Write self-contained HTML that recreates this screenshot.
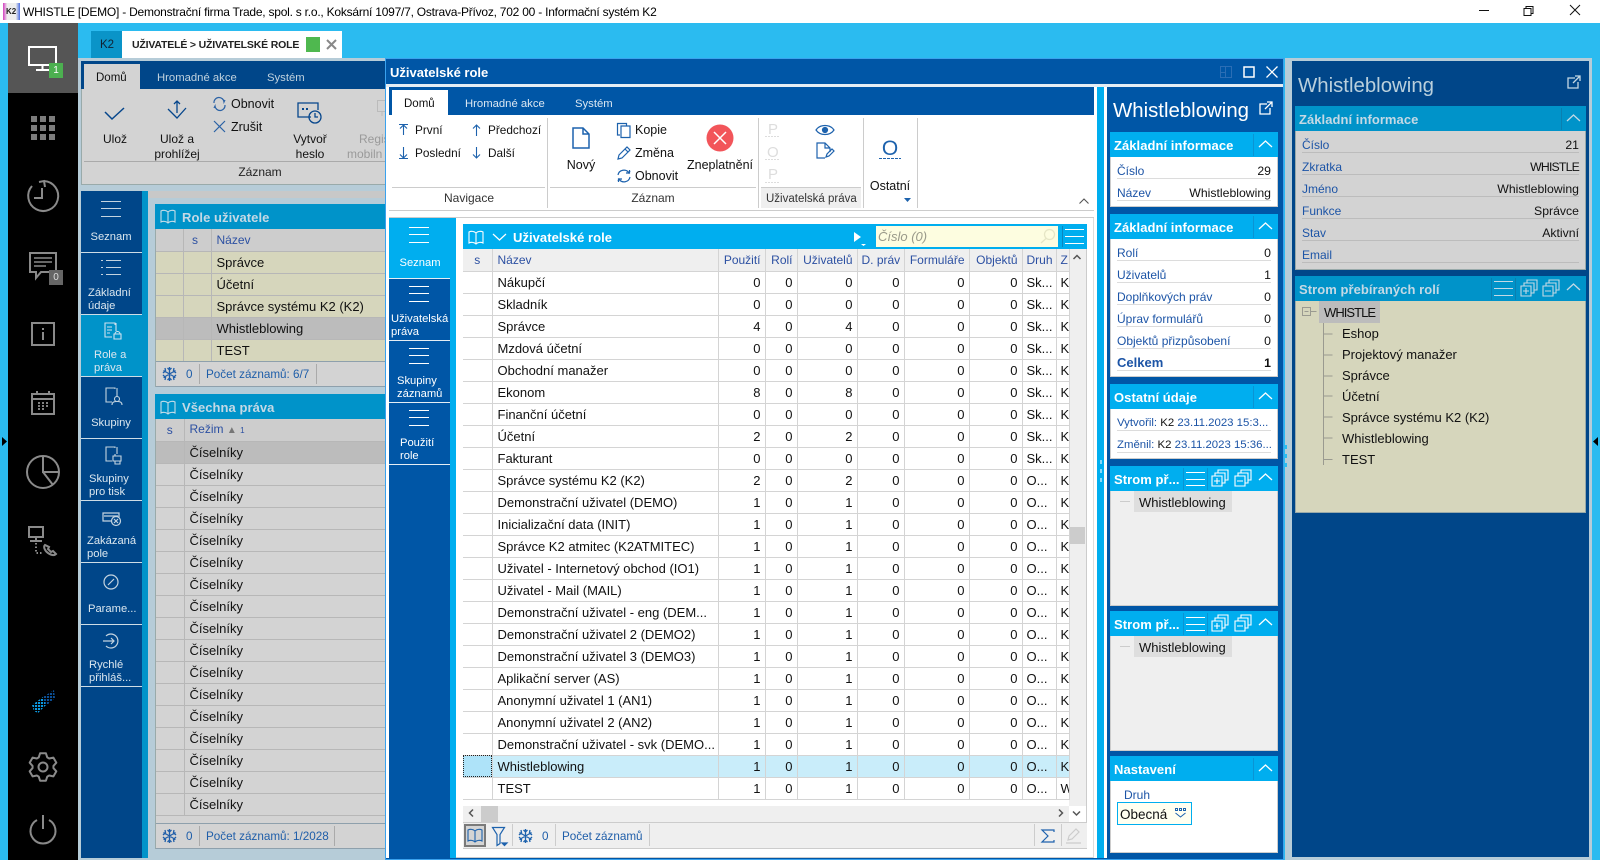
<!DOCTYPE html>
<html lang="cs"><head><meta charset="utf-8"><title>WHISTLE</title>
<style>
*{box-sizing:border-box}
html,body{margin:0;padding:0;width:1600px;height:860px;overflow:hidden;background:#2bbbf0;font:13px/16px "Liberation Sans",sans-serif;color:#111}
.b{position:absolute}
.t{position:absolute;white-space:nowrap;line-height:16px}
.c{transform:translateX(-50%)}
.r{transform:translateX(-100%)}
svg{position:absolute;overflow:visible;fill:none}
.ham{position:absolute;width:20px;height:16px;border-top:1px solid;border-bottom:1px solid}
.ham:after{content:"";position:absolute;left:0;right:0;top:6px;border-top:1px solid}
.n{color:#dbe7ef;font-size:11.2px;margin-top:1px}
.m{color:#fff;font-size:11.2px;margin-top:1px}
.lbl{color:#1c54a6;font-size:12px}
.v{font-size:12.25px}
.ln{position:absolute;height:1px;background:#dcdcdc}
.hd{font-weight:bold;font-size:13px;color:#fff;letter-spacing:.05px;margin-top:1px}
.hdim{font-weight:bold;font-size:13px;color:#c4d9e5;letter-spacing:.05px;margin-top:1px}
.rb{font-size:11.3px;margin-top:1px}
.rt{font-size:11.8px}
.st{font-size:11.7px;color:#1f5ea9;margin-top:1px}
table{position:absolute;border-collapse:collapse;table-layout:fixed;font-size:13px}
td{padding:1px 4px 0;height:22px;border-right:1px solid #d4d4d4;border-bottom:1px solid #d4d4d4;white-space:nowrap;overflow:hidden;text-align:right;line-height:16px}
td:nth-child(1),td:nth-child(2){text-align:left}
td:nth-child(9),td:nth-child(10){text-align:left;padding-right:0}
#g td:nth-child(2){padding-left:5px}
#g tr.h td{background:#efefef;color:#2c50a2;font-size:12px}
#g tr.h td:nth-child(1){text-align:center}
#g tr.h td:nth-child(n+3){text-align:right}
#g tr.s td{background:#c9edfa}
.l td{border-color:#b7b7b7;text-align:left;padding-left:5px}
.l td:nth-child(1){text-align:center;padding:1px 0 0}
</style></head><body>

<!-- title bar -->
<div class="b" style="left:0;top:0;width:1600px;height:23px;background:#fff"></div>
<div class="b" style="left:3px;top:3px;width:17px;height:17px;background:linear-gradient(90deg,#d23fbf,#eee 25%,#eee 75%,#4d6fe0)"></div>
<div class="t" style="left:6px;top:4px;font-size:8px;font-weight:bold;color:#222">K2</div>
<div class="t" style="left:23px;top:4px;font-size:12px;letter-spacing:-.23px;color:#000">WHISTLE [DEMO] - Demonstrační firma Trade, spol. s r.o., Koksární 1097/7, Ostrava-Přívoz, 702 00 - Informační systém K2</div>
<svg style="left:1479px;top:5px" width="110" height="14" stroke="#111" stroke-width="1"><path d="M0 5.500H10"/><path d="M45 3.500h7v7h-7zM47 3.500v-2h7v7h-2"/><path d="M91 0l10 10M101 0L91 10"/></svg>

<!-- sidebar -->
<div class="b" style="left:8px;top:23px;width:70px;height:837px;background:#000"></div>
<div class="b" style="left:8px;top:23px;width:70px;height:70px;background:#555"></div>
<svg style="left:28px;top:46px" width="30" height="26" stroke="#fff" stroke-width="2"><path d="M1 1h27v18H1zM14.500 19v4M8 24h13"/></svg>
<div class="b" style="left:49px;top:63px;width:14px;height:15px;background:#4cb050;color:#fff;font-size:10px;line-height:15px;text-align:center">1</div>
<svg style="left:31px;top:116px;fill:#7c7c7c" width="24" height="24"><path d="M0 0h6v6H0zM9 0h6v6H9zM18 0h6v6h-6zM0 9h6v6H0zM9 9h6v6H9zM18 9h6v6h-6zM0 18h6v6H0zM9 18h6v6H9zM18 18h6v6h-6z"/></svg>
<svg style="left:27px;top:180px" width="32" height="32" stroke="#8a8a8a" stroke-width="2"><path d="M17 1a15 15 0 1 1-12 5M12 2l5-1 1 6M15 8v10h-8" fill="none"/></svg>
<svg style="left:29px;top:252px" width="30" height="28" stroke="#8a8a8a" stroke-width="2"><path d="M1 1h26v19H12l-5 6v-6H1z"/><path d="M5 6h18M5 10h18M5 14h12" stroke-width="1.500"/></svg>
<div class="b" style="left:49px;top:270px;width:14px;height:15px;background:#666;color:#ddd;font-size:10px;line-height:15px;text-align:center">0</div>
<svg style="left:31px;top:322px" width="24" height="24" stroke="#8a8a8a" stroke-width="2"><path d="M1 1h22v22H1zM12 10v8M12 6v2"/></svg>
<svg style="left:31px;top:391px" width="24" height="24" stroke="#8a8a8a" stroke-width="2"><path d="M1 3h22v20H1zM1 8h22M6 0v4M18 0v4"/><path d="M7 12h2M11 12h2M15 12h2M7 15h2M11 15h2M15 15h2M7 18h2M11 18h2" stroke-width="1.500" stroke="#aaa"/></svg>
<svg style="left:26px;top:455px" width="34" height="34" stroke="#8a8a8a" stroke-width="2"><circle cx="17" cy="17" r="16"/><path d="M17 1v16h16M17 17l10 13"/></svg>
<svg style="left:28px;top:526px" width="30" height="32" stroke="#8a8a8a" stroke-width="2"><path d="M1 1h14v10H1zM8 11v3M2 15h12"/><path d="M8 17v10h6" stroke-dasharray="1.500 2"/><path d="M17 19c-2 2 0 6 3 8s6 3 8 1l-3-3-2 1-3-3 1-2z"/></svg>
<svg style="left:32px;top:690px" width="23" height="24"><path d="M0 15L11 7l3 8-8 8-4-2z" fill="#0b9ae2"/><path d="M11 7L22 0l1 8-9 8z" fill="#0b4f96"/><path d="M0 2.500h23M0 5.500h23M0 8.500h23M0 11.500h23M0 14.500h23M0 17.500h23M0 20.500h23M2.500 0v24M5.500 0v24M8.500 0v24M11.500 0v24M14.500 0v24M17.500 0v24M20.500 0v24" stroke="#000" stroke-width=".9"/></svg>
<svg style="left:27.500px;top:752px" width="30" height="30" stroke="#8a8a8a" stroke-width="2" stroke-linejoin="round"><circle cx="15" cy="15" r="4.500"/><path d="M10.730 5.410L12.090 1.310H17.910L19.270 5.410L21.170 6.510L25.400 5.630L28.310 10.670L25.440 13.900V16.100L28.310 19.330L25.400 24.370L21.170 23.490L19.270 24.590L17.910 28.690H12.090L10.730 24.590L8.830 23.490L4.600 24.370L1.690 19.330L4.560 16.100V13.900L1.690 10.670L4.600 5.630L8.830 6.510z"/></svg>
<svg style="left:29px;top:815px" width="28" height="28" stroke="#8a8a8a" stroke-width="2"><path d="M8 5a12.500 12.500 0 1 0 12 0M14 0v14"/></svg>
<svg style="left:2px;top:437px;fill:#000" width="5" height="9"><path d="M0 0l5 4.500L0 9z"/></svg>
<svg style="left:1593px;top:437px;fill:#000" width="5" height="9"><path d="M5 0L0 4.500 5 9z"/></svg>

<!-- tab -->
<div class="b" style="left:91px;top:31px;width:31px;height:27px;background:#0a94c8"></div>
<div class="t" style="left:100px;top:37px;font-size:11.500px;color:#123">K2</div>
<div class="b" style="left:122px;top:31px;width:220px;height:27px;background:#fff"></div>
<div class="t" style="left:132px;top:37px;font-size:10.500px;letter-spacing:-.18px;font-weight:bold;color:#222">UŽIVATELÉ &gt; UŽIVATELSKÉ ROLE</div>
<div class="b" style="left:306px;top:37px;width:14px;height:15px;background:#4fb84f"></div>
<svg style="left:326px;top:39px" width="11" height="11" stroke="#888" stroke-width="2"><path d="M1 1l9 9M10 1L1 10"/></svg>

<!-- LEFT dim window -->
<div class="b" style="left:78px;top:58px;width:308px;height:802px;background:#b6ccd8"></div>
<div class="b" style="left:81px;top:61px;width:305px;height:28px;background:#004689"></div>
<div class="b" style="left:84px;top:64px;width:56px;height:25px;background:#d3d3d3"></div>
<div class="t" style="left:96px;top:70px;font-size:11.500px">Domů</div>
<div class="t rb" style="left:157px;top:69px;color:#c0d2de">Hromadné akce</div>
<div class="t rb" style="left:267px;top:69px;color:#c0d2de">Systém</div>
<div class="b" style="left:81px;top:89px;width:305px;height:96px;background:#d3d3d3;border-bottom:1px solid #9aa;border-left:1px solid #9aa"></div>
<div class="b" style="left:84px;top:161px;width:302px;height:1px;background:#aaa"></div>
<svg style="left:105px;top:107px" width="20" height="14" stroke="#06468c" stroke-width="1.500"><path d="M0 5l7 7L19 1"/></svg>
<div class="t c" style="left:115px;top:131px;font-size:12px">Ulož</div>
<svg style="left:167px;top:100px" width="20" height="20" stroke="#06468c" stroke-width="1.300"><path d="M10 13V1M7 4l3-3 3 3M1 9l9 9L19 8"/></svg>
<div class="t c" style="left:177px;top:131px;font-size:12px">Ulož a</div>
<div class="t c" style="left:177px;top:146px;font-size:12px">prohlížej</div>
<svg style="left:213px;top:97px" width="13" height="14" stroke="#2b62a5" stroke-width="1.200"><path d="M1 6a5 5 0 0 1 10-1l1-2M12 8A5 5 0 0 1 2 9l-1 2"/></svg>
<div class="t" style="left:231px;top:96px;font-size:12.500px">Obnovit</div>
<svg style="left:214px;top:121px" width="11" height="11" stroke="#2b62a5" stroke-width="1.200"><path d="M0 0l11 11M11 0L0 11"/></svg>
<div class="t" style="left:231px;top:119px;font-size:12.500px">Zrušit</div>
<svg style="left:297px;top:102px" width="26" height="22" stroke="#06468c" stroke-width="1.300"><path d="M14 15H1V1h20v7"/><path d="M5 7h2M9 7h2" stroke-width="2"/><circle cx="18" cy="15" r="6"/><path d="M18 11v4h3"/></svg>
<div class="t c" style="left:310px;top:131px;font-size:12px">Vytvoř</div>
<div class="t c" style="left:310px;top:146px;font-size:12px">heslo</div>
<svg style="left:377px;top:100px" width="10" height="20" stroke="#bbb"><path d="M.5 .5h9v11h-9zM5 12v4"/></svg>
<div class="t" style="left:359px;top:131px;font-size:12px;color:#9a9a9a">Regis</div>
<div class="t" style="left:347px;top:146px;font-size:12px;color:#9a9a9a">mobiln</div>
<div class="t c" style="left:260px;top:164px;font-size:12px;color:#222">Záznam</div>

<!-- left nav -->
<div class="b" style="left:81px;top:191px;width:61px;height:667px;background:#004689"></div>
<div class="b" style="left:142px;top:191px;width:6px;height:667px;background:#0093c9"></div>
<div class="b" style="left:148px;top:191px;width:238px;height:7px;background:#c8c8c8"></div>
<div class="b" style="left:81px;top:315px;width:61px;height:61px;background:#0093c9"></div>
<div class="b" style="left:81px;top:252px;width:61px;height:1px;background:#cfdde6"></div>
<div class="b" style="left:81px;top:314px;width:61px;height:1px;background:#cfdde6"></div>
<div class="b" style="left:81px;top:376px;width:61px;height:1px;background:#cfdde6"></div>
<div class="b" style="left:81px;top:438px;width:61px;height:1px;background:#cfdde6"></div>
<div class="b" style="left:81px;top:500px;width:61px;height:1px;background:#cfdde6"></div>
<div class="b" style="left:81px;top:562px;width:61px;height:1px;background:#cfdde6"></div>
<div class="b" style="left:81px;top:624px;width:61px;height:1px;background:#cfdde6"></div>
<div class="b" style="left:81px;top:686px;width:61px;height:1px;background:#cfdde6"></div>
<div class="ham" style="left:101px;top:201px;color:#c4d4e0"></div>
<div class="t n c" style="left:111px;top:228px">Seznam</div>
<svg style="left:101px;top:260px" width="20" height="16" stroke="#c4d4e0"><path d="M5 .5h15M5 7.500h15M5 14.500h15M0 .5h2M0 7.500h2M0 14.500h2"/></svg>
<div class="t n" style="left:88px;top:284px">Základní</div>
<div class="t n" style="left:88px;top:297px">údaje</div>
<svg style="left:104px;top:322px" width="18" height="18" stroke="#d0e2ee" stroke-width="1.100"><path d="M8 15H1V1h10v2"/><path d="M3 5h5M3 8h5M3 11h3M12 1v8M10 12h7v5h-7zM11 12a2.500 2.500 0 0 1 5 0"/></svg>
<div class="t n" style="left:94px;top:346px">Role a</div>
<div class="t n" style="left:94px;top:359px">práva</div>
<svg style="left:105px;top:387px" width="17" height="18" stroke="#c4d4e0" stroke-width="1.100"><path d="M7 15H1V1h9v1M12 1v9"/><circle cx="12" cy="12" r="2.500"/><path d="M7 18c0-3 2-3.500 5-3.500s5 .5 5 3.500"/></svg>
<div class="t n c" style="left:111px;top:414px">Skupiny</div>
<svg style="left:105px;top:446px" width="17" height="18" stroke="#c4d4e0" stroke-width="1.100"><path d="M7 15H1V1h9v1M12 1v7M8 10h8v5H8zM10 10V8M10 15v3h5v-3"/></svg>
<div class="t n" style="left:89px;top:470px">Skupiny</div>
<div class="t n" style="left:89px;top:483px">pro tisk</div>
<svg style="left:102px;top:512px" width="20" height="15" stroke="#c4d4e0" stroke-width="1.200"><path d="M10 9H1V1h16v4M2 4h14"/><circle cx="14" cy="9" r="4.500"/><path d="M12 7l4 4M16 7l-4 4"/></svg>
<div class="t n" style="left:87px;top:532px">Zakázaná</div>
<div class="t n" style="left:87px;top:545px">pole</div>
<svg style="left:103px;top:574px" width="16" height="16" stroke="#c4d4e0" stroke-width="1.200"><circle cx="8" cy="8" r="7"/><path d="M5 11l6-6"/></svg>
<div class="t n" style="left:88px;top:600px">Parame...</div>
<svg style="left:103px;top:633px" width="16" height="16" stroke="#c4d4e0" stroke-width="1.200"><path d="M3 3a7 7 0 1 1 0 10M0 8h11M8 5l3 3-3 3"/></svg>
<div class="t n" style="left:89px;top:656px">Rychlé</div>
<div class="t n" style="left:89px;top:669px">přihláš...</div>

<!-- panel 1 -->
<div class="b" style="left:155px;top:204px;width:231px;height:25px;background:#0093c9"></div>
<svg style="left:160px;top:209px" width="17" height="16" stroke="#c6dde9" stroke-width="1.100"><path d="M8 3C6 1 3 1 1 2v11c2-1 5-1 7 1 2-2 5-2 7-1V2c-2-1-5-1-7 1zM8 3v11"/></svg>
<div class="t hdim" style="left:182px;top:209px">Role uživatele</div>
<div class="b" style="left:155px;top:229px;width:231px;height:158px;background:#d3d3d3;border-left:1px solid #9aa"></div>
<table class="l" style="left:156px;top:229px;width:230px"><colgroup><col style="width:27px"><col style="width:28px"><col></colgroup>
<tr style="background:#cdcdcd;color:#2c50a2;font-size:12px"><td><td style="text-align:center;padding-left:0">s<td>Název
<tr style="background:#d6d6bc"><td><td><td>Správce
<tr style="background:#d6d6bc"><td><td><td>Účetní
<tr style="background:#d6d6bc"><td><td><td>Správce systému K2 (K2)
<tr style="background:#bcbcbc"><td><td><td>Whistleblowing
<tr style="background:#d6d6bc"><td><td><td>TEST
</table>
<div class="b" style="left:156px;top:361px;width:230px;height:26px;background:#d3d3d3;border-top:1px solid #8ea0ac;border-bottom:1px solid #8ea0ac"></div>
<svg style="left:162px;top:366px" width="15" height="16" stroke="#1f5ea9" stroke-width="1.300"><path d="M7.500 1v14M1.500 4.500l12 7M13.500 4.500l-12 7M5.500 2l2 2 2-2M5.500 14l2-2 2 2M1 7l2.500-2.500L3 2M14 7l-2.500-2.500L12 2M1 9l2.500 2.500L3 14M14 9l-2.500 2.500L12 14"/></svg>
<div class="t st" style="left:186px;top:366px">0</div>
<div class="t st" style="left:206px;top:366px">Počet záznamů: 6/7</div>
<div class="b" style="left:199px;top:364px;width:1px;height:20px;background:#aaa"></div>
<div class="b" style="left:316px;top:364px;width:1px;height:20px;background:#aaa"></div>

<!-- panel 2 -->
<div class="b" style="left:155px;top:394px;width:231px;height:25px;background:#0093c9"></div>
<svg style="left:160px;top:400px" width="17" height="16" stroke="#c6dde9" stroke-width="1.100"><path d="M8 3C6 1 3 1 1 2v11c2-1 5-1 7 1 2-2 5-2 7-1V2c-2-1-5-1-7 1zM8 3v11"/></svg>
<div class="t hdim" style="left:182px;top:399px">Všechna práva</div>
<div class="b" style="left:155px;top:419px;width:231px;height:430px;background:#d3d3d3;border-left:1px solid #9aa;border-bottom:1px solid #8ea0ac"></div>
<table class="l" style="left:156px;top:419px;width:230px"><colgroup><col style="width:28px"><col></colgroup>
<tr style="background:#cdcdcd;color:#2c50a2;font-size:12px"><td>s<td>Režim <span style="color:#777;font-size:10px">▲</span> <span style="font-size:8px">1</span>
<tr style="background:#bcbcbc"><td><td>Číselníky
<tr><td><td>Číselníky
<tr><td><td>Číselníky
<tr><td><td>Číselníky
<tr><td><td>Číselníky
<tr><td><td>Číselníky
<tr><td><td>Číselníky
<tr><td><td>Číselníky
<tr><td><td>Číselníky
<tr><td><td>Číselníky
<tr><td><td>Číselníky
<tr><td><td>Číselníky
<tr><td><td>Číselníky
<tr><td><td>Číselníky
<tr><td><td>Číselníky
<tr><td><td>Číselníky
<tr><td><td>Číselníky
</table>
<div class="b" style="left:156px;top:823px;width:230px;height:26px;background:#d3d3d3;border-top:1px solid #8ea0ac;border-bottom:1px solid #8ea0ac"></div>
<svg style="left:162px;top:828px" width="15" height="16" stroke="#1f5ea9" stroke-width="1.300"><path d="M7.500 1v14M1.500 4.500l12 7M13.500 4.500l-12 7M5.500 2l2 2 2-2M5.500 14l2-2 2 2M1 7l2.500-2.500L3 2M14 7l-2.500-2.500L12 2M1 9l2.500 2.500L3 14M14 9l-2.500 2.500L12 14"/></svg>
<div class="t st" style="left:186px;top:828px">0</div>
<div class="t st" style="left:206px;top:828px">Počet záznamů: 1/2028</div>
<div class="b" style="left:199px;top:826px;width:1px;height:20px;background:#aaa"></div>
<div class="b" style="left:334px;top:826px;width:1px;height:20px;background:#aaa"></div>

<!-- RIGHT dim panel -->
<div class="b" style="left:1285px;top:58px;width:307px;height:802px;background:#b6ccd8"></div>
<div class="b" style="left:1292px;top:61px;width:297px;height:796px;background:#004689"></div>
<div class="t" style="left:1298px;top:74px;font-size:20.400px;line-height:24px;color:#b9cfdc">Whistleblowing</div>
<svg style="left:1567px;top:75px" width="14" height="14" stroke="#c4d8e4" stroke-width="1.300"><path d="M8 3H1v10h10V7M6 8l7-7M8 1h5v5"/></svg>
<div class="b" style="left:1295px;top:106px;width:291px;height:25px;background:#0093c9"></div>
<div class="t hdim" style="left:1299px;top:111px">Základní informace</div>
<div class="b" style="left:1561px;top:108px;width:1px;height:22px;background:#0a7fb0"></div>
<svg style="left:1567px;top:114px" width="13" height="8" stroke="#c4d9e5" stroke-width="1.300"><path d="M0 7l6.500-6L13 7"/></svg>
<div class="b" style="left:1295px;top:131px;width:291px;height:139px;background:#d3d3d3;border:1px solid #9aa;border-top:0"></div>
<div class="t lbl" style="left:1302px;top:137px">Číslo</div><div class="t r v" style="left:1579px;top:137px">21</div><div class="ln" style="left:1302px;top:152px;width:277px;background:#bcbcbc"></div>
<div class="t lbl" style="left:1302px;top:159px">Zkratka</div><div class="t r v" style="left:1579px;top:159px;letter-spacing:-.8px">WHISTLE</div><div class="ln" style="left:1302px;top:174px;width:277px;background:#bcbcbc"></div>
<div class="t lbl" style="left:1302px;top:181px">Jméno</div><div class="t r v" style="left:1579px;top:181px">Whistleblowing</div><div class="ln" style="left:1302px;top:196px;width:277px;background:#bcbcbc"></div>
<div class="t lbl" style="left:1302px;top:203px">Funkce</div><div class="t r v" style="left:1579px;top:203px">Správce</div><div class="ln" style="left:1302px;top:218px;width:277px;background:#bcbcbc"></div>
<div class="t lbl" style="left:1302px;top:225px">Stav</div><div class="t r v" style="left:1579px;top:225px">Aktivní</div><div class="ln" style="left:1302px;top:240px;width:277px;background:#bcbcbc"></div>
<div class="t lbl" style="left:1302px;top:247px">Email</div><div class="ln" style="left:1302px;top:262px;width:277px;background:#bcbcbc"></div>
<div class="b" style="left:1295px;top:276px;width:291px;height:25px;background:#0093c9"></div>
<div class="t hdim" style="left:1299px;top:281px">Strom přebíraných rolí</div>
<div class="b" style="left:1491px;top:278px;width:1px;height:22px;background:#0a7fb0"></div>
<div class="b" style="left:1515px;top:278px;width:1px;height:22px;background:#0a7fb0"></div>
<div class="ham" style="left:1494px;top:281px;color:#c4d9e5;height:15px;width:19px"></div>
<svg style="left:1520px;top:280px" width="60" height="17" stroke="#c4d9e5" stroke-width="1.100"><path d="M1 6h10v10H1zM4 6V3h10v10h-3M7 3V0h10v10h-3M3 11h6M6 8v6"/><path d="M23 6h10v10H23zM26 6V3h10v10h-3M29 3V0h10v10h-3M25 11h6"/><path d="M47 10l6.500-6L60 10" stroke-width="1.300"/></svg>
<div class="b" style="left:1295px;top:301px;width:291px;height:212px;background:#d6d6bc;border:1px solid #9aa;border-top:0"></div>
<div class="b" style="left:1319px;top:301px;width:61px;height:22px;background:#bcbcbc"></div>
<svg style="left:1302px;top:307px" width="40" height="160" stroke="#9a9a90"><path d="M.5 .5h8v8h-8zM2.500 4.500h4M8.500 4.500h6M21.500 16v142M21.500 27h9M21.500 48h9M21.500 69h9M21.500 89h9M21.500 110h9M21.500 131h9M21.500 152.500h9"/></svg>
<div class="t" style="left:1324px;top:305px;letter-spacing:-.95px">WHISTLE</div>
<div class="t" style="left:1342px;top:326px">Eshop</div>
<div class="t" style="left:1342px;top:347px">Projektový manažer</div>
<div class="t" style="left:1342px;top:368px">Správce</div>
<div class="t" style="left:1342px;top:389px">Účetní</div>
<div class="t" style="left:1342px;top:410px">Správce systému K2 (K2)</div>
<div class="t" style="left:1342px;top:431px">Whistleblowing</div>
<div class="t" style="left:1342px;top:452px">TEST</div>

<!-- MODAL -->
<div class="b" style="left:385px;top:58px;width:899px;height:802px;background:#0056a6;border:1px solid #3aa2ee"></div>
<div class="t" style="left:390px;top:65px;font-weight:bold;font-size:13px;color:#fff">Uživatelské role</div>
<svg style="left:1220px;top:66px" width="60" height="12"><path d="M.5 .5h11v11H.5zM.5 6.500h5v5M5.500 .5v6" stroke="#2b6eb5"/><path d="M24 1h10v10H24z" stroke="#fff" stroke-width="1.500"/><path d="M46.500 .5l11 11M57.500 .5l-11 11" stroke="#fff" stroke-width="1.300"/></svg>
<div class="b" style="left:386px;top:84px;width:897px;height:3px;background:#e6eef4"></div>
<div class="b" style="left:386px;top:87px;width:721px;height:771px;background:#fff"></div>
<div class="b" style="left:1097px;top:87px;width:7px;height:771px;background:#00aeef"></div>
<div class="b" style="left:389px;top:87px;width:705px;height:28px;background:#0056a6"></div>
<div class="b" style="left:392px;top:90px;width:56px;height:25px;background:#fff"></div>
<div class="t" style="left:404px;top:96px;font-size:11.500px">Domů</div>
<div class="t rb" style="left:465px;top:95px;color:#dbe7f2">Hromadné akce</div>
<div class="t rb" style="left:575px;top:95px;color:#dbe7f2">Systém</div>
<div class="b" style="left:389px;top:210px;width:705px;height:1px;background:#ccc"></div>
<div class="b" style="left:389px;top:217px;width:705px;height:1px;background:#ccc"></div>
<div class="b" style="left:392px;top:187px;width:153px;height:1px;background:#ccc"></div>
<div class="b" style="left:550px;top:187px;width:206px;height:1px;background:#ccc"></div>
<div class="b" style="left:761px;top:187px;width:100px;height:21px;background:#efefef;border-top:1px solid #ccc"></div>
<div class="b" style="left:547px;top:118px;width:1px;height:90px;background:#ccc"></div>
<div class="b" style="left:758px;top:118px;width:1px;height:90px;background:#ccc"></div>
<div class="b" style="left:863px;top:118px;width:1px;height:90px;background:#ccc"></div>
<div class="b" style="left:917px;top:118px;width:1px;height:90px;background:#ccc"></div>
<svg style="left:399px;top:124px" width="90" height="36" stroke="#1d62ad" stroke-width="1.100"><path d="M0 .5h9M4.500 1v10M1 4.500l3.500-3.500 3.500 3.500M0 34.500h9M4.500 23v11M1 30.500l3.500 3.500 3.500-3.500"/><path d="M77.500 1v11M74 4.500l3.500-3.500 3.500 3.500M77.500 23v11M74 30.500l3.500 3.500 3.500-3.500"/></svg>
<div class="t rt" style="left:415px;top:122px">První</div>
<div class="t rt" style="left:415px;top:145px">Poslední</div>
<div class="t rt" style="left:488px;top:122px">Předchozí</div>
<div class="t rt" style="left:488px;top:145px">Další</div>
<div class="t c" style="left:469px;top:190px;font-size:12px;color:#333">Navigace</div>
<svg style="left:572px;top:127px" width="18" height="22" stroke="#1d62ad" stroke-width="1.500"><path d="M1 1h10l6 6v14H1zM11 1v6h6"/></svg>
<div class="t c" style="left:581px;top:157px;font-size:12.500px">Nový</div>
<svg style="left:617px;top:123px" width="14" height="15" stroke="#1d62ad" stroke-width="1.200"><path d="M3 12H.5V.5h9V3M4 3h9v11.500H4z"/></svg>
<div class="t" style="left:635px;top:122px;font-size:12.500px">Kopie</div>
<svg style="left:617px;top:146px" width="14" height="14" stroke="#1d62ad" stroke-width="1.200"><path d="M1 13l1-4 8-8 3 3-8 8zM8 3l3 3"/></svg>
<div class="t" style="left:635px;top:145px;font-size:12.500px">Změna</div>
<svg style="left:617px;top:169px" width="14" height="14" stroke="#1d62ad" stroke-width="1.200"><path d="M1 6a6 6 0 0 1 11-2l1-2M13 8A6 6 0 0 1 2 10l-1 2M9 4h3.500V1M5 10H1.500v3"/></svg>
<div class="t" style="left:635px;top:168px;font-size:12.500px">Obnovit</div>
<svg style="left:706px;top:124px" width="28" height="28"><circle cx="14" cy="14" r="13.500" fill="#f2555a"/><path d="M8 8l12 12M20 8L8 20" stroke="#fff" stroke-width="1.500"/></svg>
<div class="t c" style="left:720px;top:157px;font-size:12.500px">Zneplatnění</div>
<div class="t c" style="left:653px;top:190px;font-size:12px;color:#333">Záznam</div>
<div class="t" style="left:768px;top:122px;color:#ddd;font-size:15px">P</div>
<div class="t" style="left:767px;top:145px;color:#ddd;font-size:15px">O</div>
<div class="t" style="left:768px;top:167px;color:#ddd;font-size:15px">P</div>
<svg style="left:765px;top:136px" width="14" height="48" stroke="#ddd"><path d="M0 .5h14M0 23.500h14M0 46.500h14" stroke-dasharray="2 1"/></svg>
<svg style="left:815px;top:124px" width="20" height="36" stroke="#1d62ad" stroke-width="1.200"><path d="M1 6c4-6 14-6 18 0-4 6-14 6-18 0z"/><circle cx="10" cy="6" r="2.500" fill="#1d62ad"/><path d="M10 34H2V19h8l5 5v4M10 19v5h5"/><path d="M11 33l1-3 5-5 2 2-5 5z"/></svg>
<div class="t" style="left:766px;top:191px;font-size:11.500px;color:#333">Uživatelská práva</div>
<div class="t c" style="left:890px;top:137px;font-size:21px;line-height:24px;color:#1d62ad">O</div>
<svg style="left:879px;top:158px" width="22" height="1" stroke="#1d62ad"><path d="M0 .5h22" stroke-dasharray="3 1"/></svg>
<div class="t c" style="left:890px;top:178px;font-size:12.500px">Ostatní</div>
<svg style="left:904px;top:198px;fill:#1d62ad" width="7" height="4"><path d="M0 0h7L3.500 4z"/></svg>
<svg style="left:1079px;top:198px" width="10" height="6" stroke="#555" stroke-width="1.100"><path d="M.5 5.500L5 1l4.500 4.500"/></svg>

<!-- modal nav -->
<div class="b" style="left:389px;top:218px;width:61px;height:640px;background:#0056a6"></div>
<div class="b" style="left:450px;top:218px;width:6px;height:640px;background:#00aeef"></div>
<div class="b" style="left:389px;top:218px;width:67px;height:60px;background:#00aeef"></div>
<div class="b" style="left:389px;top:278px;width:61px;height:1px;background:#e6eef4"></div>
<div class="b" style="left:389px;top:340px;width:61px;height:1px;background:#e6eef4"></div>
<div class="b" style="left:389px;top:402px;width:61px;height:1px;background:#e6eef4"></div>
<div class="b" style="left:389px;top:464px;width:61px;height:1px;background:#e6eef4"></div>
<div class="ham" style="left:409px;top:227px;color:#fff"></div>
<div class="t m c" style="left:420px;top:254px">Seznam</div>
<div class="ham" style="left:409px;top:286px;color:#fff"></div>
<div class="t m" style="left:391px;top:310px">Uživatelská</div>
<div class="t m" style="left:391px;top:323px">práva</div>
<div class="ham" style="left:409px;top:348px;color:#fff"></div>
<div class="t m" style="left:397px;top:372px">Skupiny</div>
<div class="t m" style="left:397px;top:385px">záznamů</div>
<div class="ham" style="left:409px;top:410px;color:#fff"></div>
<div class="t m" style="left:400px;top:434px">Použití</div>
<div class="t m" style="left:400px;top:447px">role</div>

<!-- grid -->
<div class="b" style="left:456px;top:218px;width:638px;height:640px;background:#fff;border-bottom:1px solid #ccc;border-right:1px solid #ddd"></div>
<div class="b" style="left:463px;top:224px;width:624px;height:25px;background:#00aeef"></div>
<svg style="left:468px;top:230px" width="17" height="16" stroke="#fff" stroke-width="1.100"><path d="M8 3C6 1 3 1 1 2v11c2-1 5-1 7 1 2-2 5-2 7-1V2c-2-1-5-1-7 1zM8 3v11"/></svg>
<svg style="left:493px;top:233px" width="13" height="8" stroke="#fff" stroke-width="1.200"><path d="M0 1l6.500 6L13 1"/></svg>
<div class="t hd" style="left:513px;top:229px">Uživatelské role</div>
<svg style="left:854px;top:232px;fill:#fff" width="14" height="16"><path d="M0 0l7 5-7 5z"/><path d="M7 12h5l-2.500 2z"/></svg>
<div class="b" style="left:876px;top:226px;width:182px;height:21px;background:#fdfde0"></div>
<div class="t" style="left:878px;top:229px;font-style:italic;color:#9a9a8a">Číslo (0)</div>
<svg style="left:1041px;top:229px" width="14" height="15" stroke="#e6e6c6" stroke-width="1.300"><circle cx="8.500" cy="5.500" r="5"/><path d="M5 9.500L0 14"/></svg>
<div class="b" style="left:1062px;top:226px;width:1px;height:21px;background:#0a86c0"></div>
<div class="ham" style="left:1065px;top:229px;color:#fff;width:19px;height:15px"></div>
<div class="b" style="left:1069px;top:249px;width:18px;height:557px;background:#efefef"></div>
<svg style="left:1073px;top:254px" width="8" height="6" stroke="#555" stroke-width="1.500"><path d="M.5 5L4 1.500 7.500 5"/></svg>
<div class="b" style="left:1070px;top:527px;width:15px;height:17px;background:#ccc"></div>
<div class="b" style="left:1086px;top:249px;width:1px;height:600px;background:#ccc"></div>

<table id="g" style="left:463px;top:249px;width:606px"><colgroup><col style="width:29px"><col style="width:226px"><col style="width:47px"><col style="width:32px"><col style="width:60px"><col style="width:47px"><col style="width:65px"><col style="width:53px"><col style="width:34px"><col style="width:13px"></colgroup>
<tr class="h"><td>s<td>Název<td>Použití<td>Rolí<td>Uživatelů<td>D. práv<td>Formuláře<td>Objektů<td style="text-align:left">Druh<td style="text-align:left">Z
<tr><td><td>Nákupčí<td>0<td>0<td>0<td>0<td>0<td>0<td>Sk...<td>K
<tr><td><td>Skladník<td>0<td>0<td>0<td>0<td>0<td>0<td>Sk...<td>K
<tr><td><td>Správce<td>4<td>0<td>4<td>0<td>0<td>0<td>Sk...<td>K
<tr><td><td>Mzdová účetní<td>0<td>0<td>0<td>0<td>0<td>0<td>Sk...<td>K
<tr><td><td>Obchodní manažer<td>0<td>0<td>0<td>0<td>0<td>0<td>Sk...<td>K
<tr><td><td>Ekonom<td>8<td>0<td>8<td>0<td>0<td>0<td>Sk...<td>K
<tr><td><td>Finanční účetní<td>0<td>0<td>0<td>0<td>0<td>0<td>Sk...<td>K
<tr><td><td>Účetní<td>2<td>0<td>2<td>0<td>0<td>0<td>Sk...<td>K
<tr><td><td>Fakturant<td>0<td>0<td>0<td>0<td>0<td>0<td>Sk...<td>K
<tr><td><td>Správce systému K2 (K2)<td>2<td>0<td>2<td>0<td>0<td>0<td>O...<td>K
<tr><td><td>Demonstrační uživatel (DEMO)<td>1<td>0<td>1<td>0<td>0<td>0<td>O...<td>K
<tr><td><td>Inicializační data (INIT)<td>1<td>0<td>1<td>0<td>0<td>0<td>O...<td>K
<tr><td><td>Správce K2 atmitec (K2ATMITEC)<td>1<td>0<td>1<td>0<td>0<td>0<td>O...<td>K
<tr><td><td>Uživatel - Internetový obchod (IO1)<td>1<td>0<td>1<td>0<td>0<td>0<td>O...<td>K
<tr><td><td>Uživatel - Mail (MAIL)<td>1<td>0<td>1<td>0<td>0<td>0<td>O...<td>K
<tr><td><td>Demonstrační uživatel - eng (DEM...<td>1<td>0<td>1<td>0<td>0<td>0<td>O...<td>K
<tr><td><td>Demonstrační uživatel 2 (DEMO2)<td>1<td>0<td>1<td>0<td>0<td>0<td>O...<td>K
<tr><td><td>Demonstrační uživatel 3 (DEMO3)<td>1<td>0<td>1<td>0<td>0<td>0<td>O...<td>K
<tr><td><td>Aplikační server (AS)<td>1<td>0<td>1<td>0<td>0<td>0<td>O...<td>K
<tr><td><td>Anonymní uživatel 1 (AN1)<td>1<td>0<td>1<td>0<td>0<td>0<td>O...<td>K
<tr><td><td>Anonymní uživatel 2 (AN2)<td>1<td>0<td>1<td>0<td>0<td>0<td>O...<td>K
<tr><td><td>Demonstrační uživatel - svk (DEMO...<td>1<td>0<td>1<td>0<td>0<td>0<td>O...<td>K
<tr class="s"><td style="background:#aee3f9;outline:1px dotted #222;outline-offset:-1px"><td>Whistleblowing<td>1<td>0<td>1<td>0<td>0<td>0<td>O...<td>K
<tr><td><td>TEST<td>1<td>0<td>1<td>0<td>0<td>0<td>O...<td>W
</table>

<div class="b" style="left:463px;top:806px;width:606px;height:16px;background:#efefef"></div>
<div class="b" style="left:481px;top:806px;width:17px;height:16px;background:#ccc"></div>
<svg style="left:469px;top:809px" width="610" height="9" stroke="#555" stroke-width="1.500"><path d="M4 .5L.5 4 4 7.500M590 .5L593.500 4 590 7.500M604 2.500L607.500 6 611 2.500"/></svg>
<div class="b" style="left:463px;top:822px;width:624px;height:27px;background:#efefef;border-top:1px solid #ccc;border-bottom:1px solid #ccc"></div>
<div class="b" style="left:464px;top:824px;width:22px;height:23px;background:#d4d4d4;border:2px solid #7a7a7a"></div>
<svg style="left:467px;top:829px" width="16" height="14" stroke="#1d62ad" stroke-width="1.100"><path d="M8 2C6 0 3 0 1 1v11c2-1 5-1 7 1 2-2 5-2 7-1V1c-2-1-5-1-7 1zM8 2v11"/></svg>
<svg style="left:492px;top:827px" width="16" height="20" stroke="#1d62ad" stroke-width="1.200"><path d="M.5 .5h12l-4.500 7v9l-3 2V7.500z"/><path d="M10 16h5l-2.500 2.500z" fill="#1d62ad"/></svg>
<svg style="left:518px;top:828px" width="15" height="16" stroke="#1d62ad" stroke-width="1.300"><path d="M7.500 1v14M1.500 4.500l12 7M13.500 4.500l-12 7M5.500 2l2 2 2-2M5.500 14l2-2 2 2M1 7l2.500-2.500L3 2M14 7l-2.500-2.500L12 2M1 9l2.500 2.500L3 14M14 9l-2.500 2.500L12 14"/></svg>
<div class="t st" style="left:542px;top:828px">0</div>
<div class="t st" style="left:562px;top:828px">Počet záznamů</div>
<div class="b" style="left:512px;top:824px;width:1px;height:22px;background:#ccc"></div>
<div class="b" style="left:555px;top:824px;width:1px;height:22px;background:#ccc"></div>
<div class="b" style="left:649px;top:824px;width:1px;height:22px;background:#ccc"></div>
<div class="b" style="left:1034px;top:824px;width:1px;height:22px;background:#ccc"></div>
<div class="b" style="left:1061px;top:824px;width:1px;height:22px;background:#ccc"></div>
<svg style="left:1041px;top:829px" width="14" height="15" stroke="#1d62ad" stroke-width="1.200"><path d="M13 3V1H1l6 6-6 6h12v-2"/></svg>
<svg style="left:1066px;top:828px" width="16" height="16" stroke="#ccc" stroke-width="1.200"><path d="M2 12l1-4 7-7 3 3-7 7zM0 15h15"/></svg>

<!-- modal right panel -->
<div class="b" style="left:1107px;top:87px;width:174px;height:770px;background:#0056a6"></div>
<div class="t" style="left:1113px;top:99px;font-size:20.400px;line-height:24px;color:#fff">Whistleblowing</div>
<svg style="left:1259px;top:101px" width="14" height="14" stroke="#fff" stroke-width="1.300"><path d="M8 3H1v10h10V7M6 8l7-7M8 1h5v5"/></svg>

<div class="b" style="left:1110px;top:132px;width:168px;height:25px;background:#00aeef"></div>
<div class="t hd" style="left:1114px;top:137px">Základní informace</div>
<div class="b" style="left:1253px;top:134px;width:1px;height:22px;background:#0a94d4"></div>
<svg style="left:1259px;top:140px" width="13" height="8" stroke="#fff" stroke-width="1.300"><path d="M0 7l6.500-6L13 7"/></svg>
<div class="b" style="left:1110px;top:157px;width:168px;height:50px;background:#fff;border:1px solid #ccc;border-top:0"></div>
<div class="t lbl" style="left:1117px;top:163px">Číslo</div><div class="t r v" style="left:1271px;top:163px">29</div><div class="ln" style="left:1117px;top:178px;width:154px"></div>
<div class="t lbl" style="left:1117px;top:185px">Název</div><div class="t r v" style="left:1271px;top:185px">Whistleblowing</div><div class="ln" style="left:1117px;top:200px;width:154px"></div>

<div class="b" style="left:1110px;top:214px;width:168px;height:25px;background:#00aeef"></div>
<div class="t hd" style="left:1114px;top:219px">Základní informace</div>
<div class="b" style="left:1253px;top:216px;width:1px;height:22px;background:#0a94d4"></div>
<svg style="left:1259px;top:222px" width="13" height="8" stroke="#fff" stroke-width="1.300"><path d="M0 7l6.500-6L13 7"/></svg>
<div class="b" style="left:1110px;top:239px;width:168px;height:138px;background:#fff;border:1px solid #ccc;border-top:0"></div>
<div class="t lbl" style="left:1117px;top:245px">Rolí</div><div class="t r v" style="left:1271px;top:245px">0</div><div class="ln" style="left:1117px;top:260px;width:154px"></div>
<div class="t lbl" style="left:1117px;top:267px">Uživatelů</div><div class="t r v" style="left:1271px;top:267px">1</div><div class="ln" style="left:1117px;top:282px;width:154px"></div>
<div class="t lbl" style="left:1117px;top:289px">Doplňkových práv</div><div class="t r v" style="left:1271px;top:289px">0</div><div class="ln" style="left:1117px;top:304px;width:154px"></div>
<div class="t lbl" style="left:1117px;top:311px">Úprav formulářů</div><div class="t r v" style="left:1271px;top:311px">0</div><div class="ln" style="left:1117px;top:326px;width:154px"></div>
<div class="t lbl" style="left:1117px;top:333px">Objektů přizpůsobení</div><div class="t r v" style="left:1271px;top:333px">0</div><div class="ln" style="left:1117px;top:348px;width:154px"></div>
<div class="t lbl" style="left:1117px;top:355px;font-weight:bold;font-size:13px">Celkem</div><div class="t r v" style="left:1271px;top:355px;font-weight:bold">1</div><div class="ln" style="left:1117px;top:370px;width:154px"></div>

<div class="b" style="left:1110px;top:384px;width:168px;height:25px;background:#00aeef"></div>
<div class="t hd" style="left:1114px;top:389px">Ostatní údaje</div>
<div class="b" style="left:1253px;top:386px;width:1px;height:22px;background:#0a94d4"></div>
<svg style="left:1259px;top:392px" width="13" height="8" stroke="#fff" stroke-width="1.300"><path d="M0 7l6.500-6L13 7"/></svg>
<div class="b" style="left:1110px;top:409px;width:168px;height:50px;background:#fff;border:1px solid #ccc;border-top:0"></div>
<div class="t lbl" style="left:1117px;top:415px;font-size:11.400px">Vytvořil: <span style="color:#111">K2</span> 23.11.2023 15:3...</div><div class="ln" style="left:1117px;top:430px;width:154px"></div>
<div class="t lbl" style="left:1117px;top:437px;font-size:11.400px">Změnil: <span style="color:#111">K2</span> 23.11.2023 15:36...</div><div class="ln" style="left:1117px;top:452px;width:154px"></div>

<div class="b" style="left:1110px;top:466px;width:168px;height:25px;background:#00aeef"></div>
<div class="t hd" style="left:1114px;top:471px">Strom př...</div>
<div class="b" style="left:1183px;top:468px;width:1px;height:22px;background:#0a94d4"></div>
<div class="b" style="left:1207px;top:468px;width:1px;height:22px;background:#0a94d4"></div>
<div class="ham" style="left:1186px;top:472px;color:#fff;width:19px;height:14px"></div>
<svg style="left:1211px;top:470px" width="62" height="17" stroke="#fff" stroke-width="1.100"><path d="M1 6h10v10H1zM4 6V3h10v10h-3M7 3V0h10v10h-3M3 11h6M6 8v6"/><path d="M24 6h10v10H24zM27 6V3h10v10h-3M30 3V0h10v10h-3M26 11h6"/><path d="M48 10l6.500-6L61 10" stroke-width="1.300"/></svg>
<div class="b" style="left:1110px;top:491px;width:168px;height:115px;background:#efefef;border:1px solid #ccc;border-top:0"></div>
<div class="b" style="left:1120px;top:501px;width:10px;height:1px;background:#ccc"></div>
<div class="b" style="left:1134px;top:491px;width:98px;height:21px;background:#dedede"></div>
<div class="t" style="left:1139px;top:495px">Whistleblowing</div>

<div class="b" style="left:1110px;top:611px;width:168px;height:25px;background:#00aeef"></div>
<div class="t hd" style="left:1114px;top:616px">Strom př...</div>
<div class="b" style="left:1183px;top:613px;width:1px;height:22px;background:#0a94d4"></div>
<div class="b" style="left:1207px;top:613px;width:1px;height:22px;background:#0a94d4"></div>
<div class="ham" style="left:1186px;top:617px;color:#fff;width:19px;height:14px"></div>
<svg style="left:1211px;top:615px" width="62" height="17" stroke="#fff" stroke-width="1.100"><path d="M1 6h10v10H1zM4 6V3h10v10h-3M7 3V0h10v10h-3M3 11h6M6 8v6"/><path d="M24 6h10v10H24zM27 6V3h10v10h-3M30 3V0h10v10h-3M26 11h6"/><path d="M48 10l6.500-6L61 10" stroke-width="1.300"/></svg>
<div class="b" style="left:1110px;top:636px;width:168px;height:115px;background:#efefef;border:1px solid #ccc;border-top:0"></div>
<div class="b" style="left:1120px;top:646px;width:10px;height:1px;background:#ccc"></div>
<div class="b" style="left:1134px;top:636px;width:98px;height:21px;background:#dedede"></div>
<div class="t" style="left:1139px;top:640px">Whistleblowing</div>

<div class="b" style="left:1110px;top:756px;width:168px;height:25px;background:#00aeef"></div>
<div class="t hd" style="left:1114px;top:761px">Nastavení</div>
<div class="b" style="left:1253px;top:758px;width:1px;height:22px;background:#0a94d4"></div>
<svg style="left:1259px;top:764px" width="13" height="8" stroke="#fff" stroke-width="1.300"><path d="M0 7l6.500-6L13 7"/></svg>
<div class="b" style="left:1110px;top:781px;width:168px;height:72px;background:#fff;border:1px solid #ccc;border-top:0"></div>
<div class="t lbl" style="left:1124px;top:787px">Druh</div>
<div class="b" style="left:1117px;top:802px;width:75px;height:23px;background:#fffff0;border:1px solid #00aeef"></div>
<div class="t" style="left:1120px;top:807px;font-size:13.500px">Obecná</div>
<svg style="left:1175px;top:808px" width="12" height="10" stroke="#1d62ad"><path d="M.5 .5h2v2h-2zM4.500 .5h2v2h-2zM8.500 .5h2v2h-2zM.5 5l5 4 5-4"/></svg>

<!-- grips -->
<svg style="left:1285px;top:445px" width="3" height="30" stroke="#2bbbf0" stroke-width="2"><path d="M1 0v4M1 9v4M1 18v4"/></svg>
<svg style="left:1100px;top:460px" width="3" height="30" stroke="#8ad8f8" stroke-width="2"><path d="M1 0v4M1 9v4M1 18v4"/></svg>
</body></html>
